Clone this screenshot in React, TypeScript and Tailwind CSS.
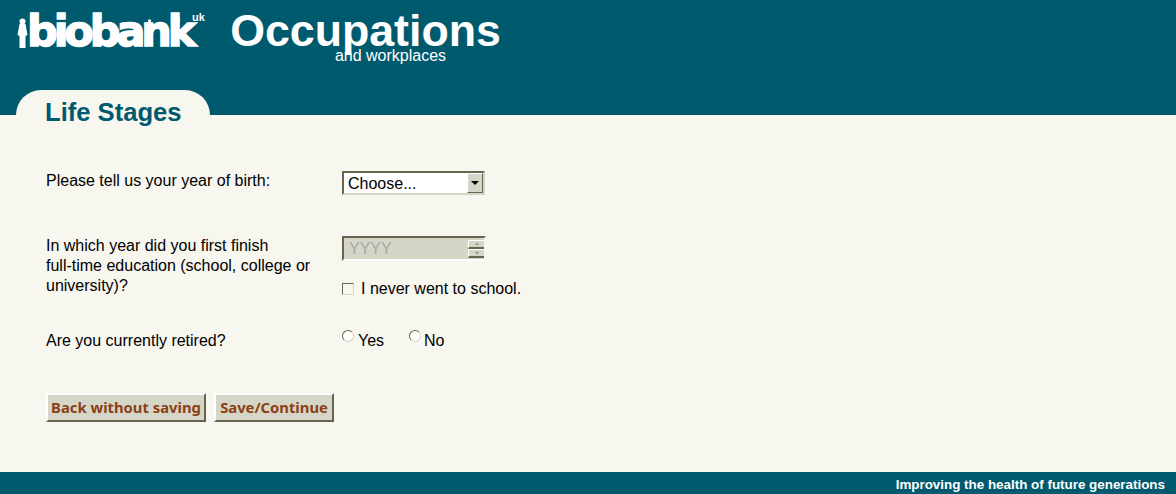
function Figure({ className }: { className: string }) {
  return (
    <svg className={className} viewBox="0 0 10 30" fill="#fff">
      <circle cx="5" cy="3.5" r="3" />
      <path d="M2 6h6l2 11-2 1v12H2V18l-2-1z" />
    </svg>
  );
}

export default function App() {
  return (
    <div className="w-[1176px] h-[494px] flex flex-col bg-[#f7f6ef] font-['Liberation_Sans',Arial,sans-serif] text-black overflow-hidden">
      <header className="h-[115px] bg-[#005a6e] flex flex-col justify-between">
        <div className="flex items-start pl-[15px] pt-[6px]">
          <div className="relative w-[215px] h-[48px] flex items-start text-white">
            <span className="w-[165px] font-['DejaVu_Sans',sans-serif] font-bold text-[43px] leading-[48px] tracking-[-4.1px] ml-[12px] mt-[1px] [-webkit-text-stroke:1.5px_white]">biobank</span>
            <span className="text-[11px] font-bold leading-none mt-[6px]">uk</span>
            <Figure className="absolute left-[1px] top-[12px] w-[13px] h-[30px]" />
            <Figure className="absolute left-[130px] top-[13px] w-[9px] h-[16px]" />
            <Figure className="absolute left-[158px] top-[7px] w-[9px] h-[16px]" />
          </div>
          <div className="w-[271px] flex flex-col items-center text-white">
            <h1 className="text-[44.7px] font-bold leading-[50px]">Occupations</h1>
            <span className="text-[16px] leading-[18px] -mt-[9px] ml-[50px]">and workplaces</span>
          </div>
        </div>
        <div className="ml-4 w-[194px] h-[25px] bg-[#f7f6ef] rounded-t-[25px] pl-[29px] text-[25.6px] font-bold leading-[44px] text-[#005a6e]">
          Life Stages
        </div>
      </header>

      <main className="flex-1 pl-[46px] pt-[56px]">
        <div className="flex h-[24px] items-center">
          <label className="w-[296px] text-[16px] leading-[18px] -mt-[4px]">Please tell us your year of birth:</label>
          <div className="w-[143px] h-[24px] flex bg-white border-2 border-[#66664f] border-r-[#d6d6c8] border-b-[#d6d6c8]">
            <span className="flex-1 pl-1 text-[16px] leading-[22px]">Choose...</span>
            <span className="w-[16px] h-[20px] bg-[#d6d6c8] border border-t-white border-l-white border-r-[#66664f] border-b-[#66664f] flex items-center justify-center">
              <svg width="8" height="4" viewBox="0 0 8 4"><path d="M0 0h8L4 4z" fill="#000" /></svg>
            </span>
          </div>
        </div>

        <div className="flex mt-[41px]">
          <label className="w-[296px] text-[16px] leading-[20px]">
            In which year did you first finish<br />full-time education (school, college or<br />university)?
          </label>
          <div className="flex flex-col">
            <div className="w-[144px] h-[25px] flex items-center justify-between bg-[#d6d6c8] border-2 border-[#66664f] border-r-[#f7f6ef] border-b-white">
              <span className="pl-[5px] text-[16px] leading-[20px] text-[#a8a8a8]">YYYY</span>
              <span className="w-[16px] flex flex-col">
                <span className="h-[9px] bg-[#d6d6c8] border-t border-l border-white border-b-2 border-b-[#66664f] flex items-center justify-center">
                  <svg width="4" height="2" viewBox="0 0 4 2"><path d="M0 2h4L2 0z" fill="#8a8a80" /></svg>
                </span>
                <span className="h-[9px] bg-[#d6d6c8] border-t border-l border-white border-b-2 border-b-[#66664f] flex items-center justify-center">
                  <svg width="4" height="2" viewBox="0 0 4 2"><path d="M0 0h4L2 2z" fill="#8a8a80" /></svg>
                </span>
              </span>
            </div>
            <label className="flex items-center mt-[18px] text-[16px] leading-[20px]">
              <span className="w-[12px] h-[12px] bg-[#f7f6ef] border border-[#66664f] border-r-[#d6d6c8] border-b-[#d6d6c8]" />
              <span className="ml-[7px]">I never went to school.</span>
            </label>
          </div>
        </div>

        <div className="flex mt-[32px] h-[20px] items-center">
          <label className="w-[296px] text-[16px] leading-[20px]">Are you currently retired?</label>
          <div className="flex">
            <label className="flex w-[67px]">
              <span className="w-[12px] h-[12px] rounded-full bg-white border border-[#66664f] border-r-[#d6d6c8] border-b-[#d6d6c8] -mt-[1px]" />
              <span className="ml-[4px] text-[16px] leading-[20px]">Yes</span>
            </label>
            <label className="flex">
              <span className="w-[12px] h-[12px] rounded-full bg-white border border-[#66664f] border-r-[#d6d6c8] border-b-[#d6d6c8] -mt-[1px]" />
              <span className="ml-[3px] text-[16px] leading-[20px]">No</span>
            </label>
          </div>
        </div>

        <div className="flex gap-[8px] mt-[42px]">
          <button className="w-[160px] h-[29px] bg-[#d6d6c8] border-2 border-t-white border-l-white border-r-[#66664f] border-b-[#66664f] font-['Noto_Sans',sans-serif] font-bold text-[14.8px] leading-none text-[#8b3f14]">
            Back without saving
          </button>
          <button className="w-[120px] h-[29px] bg-[#d6d6c8] border-2 border-t-white border-l-white border-r-[#66664f] border-b-[#66664f] font-['Noto_Sans',sans-serif] font-bold text-[14.8px] leading-none text-[#8b3f14]">
            Save/Continue
          </button>
        </div>
      </main>

      <footer className="h-[22px] bg-[#005a6e] text-white text-[13.4px] font-bold leading-[26px] text-right pr-[11px]">
        Improving the health of future generations
      </footer>
    </div>
  );
}
